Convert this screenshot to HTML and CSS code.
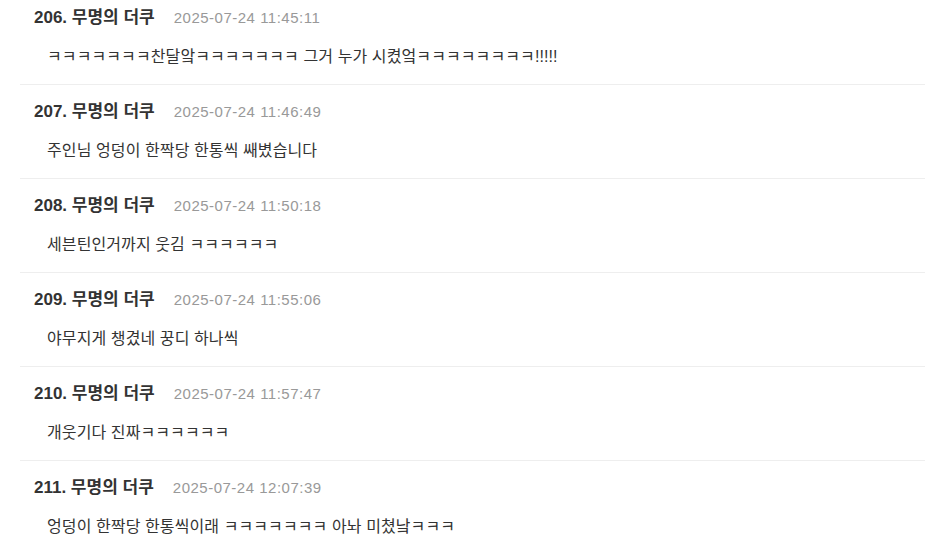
FILE: index.html
```html
<!DOCTYPE html>
<html lang="ko">
<head>
<meta charset="utf-8">
<link rel="stylesheet" href="styles.css">
</head>
<body>
<ul class="comments">
  <li class="comment">
    <div class="meta"><span class="author">206. 무명의 더쿠</span><span class="date">2025-07-24 11:45:11</span></div>
    <p class="text">ㅋㅋㅋㅋㅋㅋㅋ찬달앜ㅋㅋㅋㅋㅋㅋㅋ 그거 누가 시켰엌ㅋㅋㅋㅋㅋㅋㅋㅋ!!!!!</p>
  </li>
  <li class="comment">
    <div class="meta"><span class="author">207. 무명의 더쿠</span><span class="date">2025-07-24 11:46:49</span></div>
    <p class="text">주인님 엉덩이 한짝당 한통씩 쌔볐습니다</p>
  </li>
  <li class="comment">
    <div class="meta"><span class="author">208. 무명의 더쿠</span><span class="date">2025-07-24 11:50:18</span></div>
    <p class="text">세븐틴인거까지 웃김 ㅋㅋㅋㅋㅋㅋ</p>
  </li>
  <li class="comment">
    <div class="meta"><span class="author">209. 무명의 더쿠</span><span class="date">2025-07-24 11:55:06</span></div>
    <p class="text">야무지게 챙겼네 꿍디 하나씩</p>
  </li>
  <li class="comment">
    <div class="meta"><span class="author">210. 무명의 더쿠</span><span class="date">2025-07-24 11:57:47</span></div>
    <p class="text">개웃기다 진짜ㅋㅋㅋㅋㅋㅋ</p>
  </li>
  <li class="comment">
    <div class="meta"><span class="author">211. 무명의 더쿠</span><span class="date">2025-07-24 12:07:39</span></div>
    <p class="text">엉덩이 한짝당 한통씩이래 ㅋㅋㅋㅋㅋㅋㅋ 아놔 미쳤낰ㅋㅋㅋ</p>
  </li>
</ul>
</body>
</html>
```
FILE: styles.css
```css
html, body {
  margin: 0;
  padding: 0;
  background: #fff;
}
body {
  font-family: "Liberation Sans", "Noto Sans CJK KR", sans-serif;
  color: #333;
  overflow: hidden;
}
.comments {
  list-style: none;
  margin: -9px 0 0 20px;
  padding: 0;
}
.comment {
  border-bottom: 1px solid #eeeeee;
  padding: 15px 0 0 14px;
  height: 78px;
}
.meta {
  display: flex;
  align-items: baseline;
  gap: 19px;
  height: 24px;
  line-height: 24px;
}
.author {
  font-size: 17px;
  font-weight: bold;
  color: #333;
}
.date {
  font-size: 15px;
  letter-spacing: 0.5px;
  color: #999;
}
.text {
  margin: 15px 0 0 13px;
  font-size: 16px;
  line-height: 24px;
  letter-spacing: 0.1px;
  color: #333;
}
```
